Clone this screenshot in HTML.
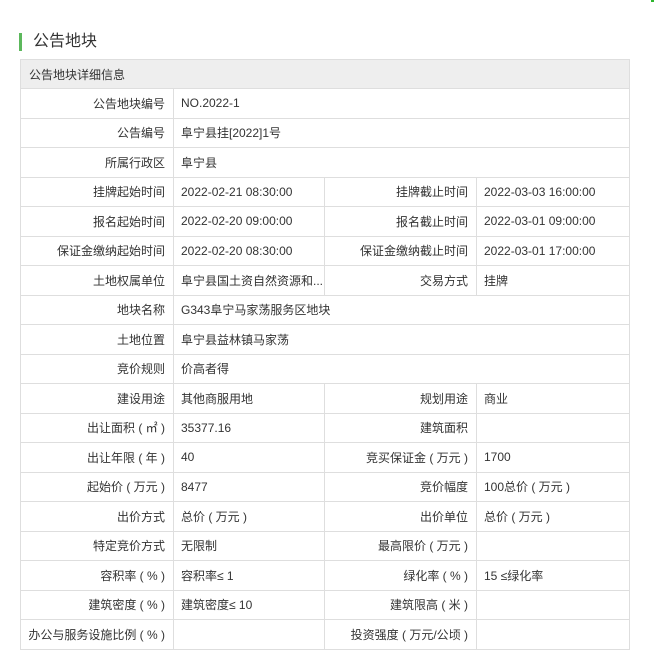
<!DOCTYPE html>
<html><head><meta charset="utf-8"><style>
body{margin:0;width:654px;height:649px;overflow:hidden;background:#fff;font-family:"Liberation Sans","Noto Sans CJK SC",sans-serif;color:#333;position:relative}
.bar{position:absolute;left:19px;top:33px;width:3px;height:18px;background:#5cb85c}
.title{position:absolute;left:33px;top:32px;font-size:16px;color:#333;line-height:20px}
.dot{position:absolute;left:651px;top:0;width:3px;height:2px;background:#2db52d}
table{position:absolute;left:20px;top:59px;border-collapse:collapse;width:609px;table-layout:fixed;font-size:12px}
td{border:1px solid #dedede;height:28.5px;padding:0;white-space:nowrap;overflow:hidden}
td.l{text-align:right;padding-right:8px}
td.v{padding-left:7px}
tr.h td{background:#eeeeee;padding-left:8px;height:28px}
</style></head><body>
<div class="dot"></div>
<div class="bar"></div><div class="title">公告地块</div>
<table>
<colgroup><col style="width:153px"><col style="width:151px"><col style="width:152px"><col style="width:153px"></colgroup>
<tr class="h"><td colspan="4">公告地块详细信息</td></tr>
<tr><td class="l">公告地块编号</td><td class="v" colspan="3">NO.2022-1</td></tr>
<tr><td class="l">公告编号</td><td class="v" colspan="3">阜宁县挂[2022]1号</td></tr>
<tr><td class="l">所属行政区</td><td class="v" colspan="3">阜宁县</td></tr>
<tr><td class="l">挂牌起始时间</td><td class="v">2022-02-21 08:30:00</td><td class="l">挂牌截止时间</td><td class="v">2022-03-03 16:00:00</td></tr>
<tr><td class="l">报名起始时间</td><td class="v">2022-02-20 09:00:00</td><td class="l">报名截止时间</td><td class="v">2022-03-01 09:00:00</td></tr>
<tr><td class="l">保证金缴纳起始时间</td><td class="v">2022-02-20 08:30:00</td><td class="l">保证金缴纳截止时间</td><td class="v">2022-03-01 17:00:00</td></tr>
<tr><td class="l">土地权属单位</td><td class="v">阜宁县国土资自然资源和...</td><td class="l">交易方式</td><td class="v">挂牌</td></tr>
<tr><td class="l">地块名称</td><td class="v" colspan="3">G343阜宁马家荡服务区地块</td></tr>
<tr><td class="l">土地位置</td><td class="v" colspan="3">阜宁县益林镇马家荡</td></tr>
<tr><td class="l">竞价规则</td><td class="v" colspan="3">价高者得</td></tr>
<tr><td class="l">建设用途</td><td class="v">其他商服用地</td><td class="l">规划用途</td><td class="v">商业</td></tr>
<tr><td class="l">出让面积 ( ㎡ )</td><td class="v">35377.16</td><td class="l">建筑面积</td><td class="v"></td></tr>
<tr><td class="l">出让年限 ( 年 )</td><td class="v">40</td><td class="l">竞买保证金 ( 万元 )</td><td class="v">1700</td></tr>
<tr><td class="l">起始价 ( 万元 )</td><td class="v">8477</td><td class="l">竞价幅度</td><td class="v">100总价 ( 万元 )</td></tr>
<tr><td class="l">出价方式</td><td class="v">总价 ( 万元 )</td><td class="l">出价单位</td><td class="v">总价 ( 万元 )</td></tr>
<tr><td class="l">特定竞价方式</td><td class="v">无限制</td><td class="l">最高限价 ( 万元 )</td><td class="v"></td></tr>
<tr><td class="l">容积率 ( % )</td><td class="v">容积率≤ 1</td><td class="l">绿化率 ( % )</td><td class="v">15 ≤绿化率</td></tr>
<tr><td class="l">建筑密度 ( % )</td><td class="v">建筑密度≤ 10</td><td class="l">建筑限高 ( 米 )</td><td class="v"></td></tr>
<tr><td class="l">办公与服务设施比例 ( % )</td><td class="v"></td><td class="l">投资强度 ( 万元/公顷 )</td><td class="v"></td></tr>
</table>
</body></html>
